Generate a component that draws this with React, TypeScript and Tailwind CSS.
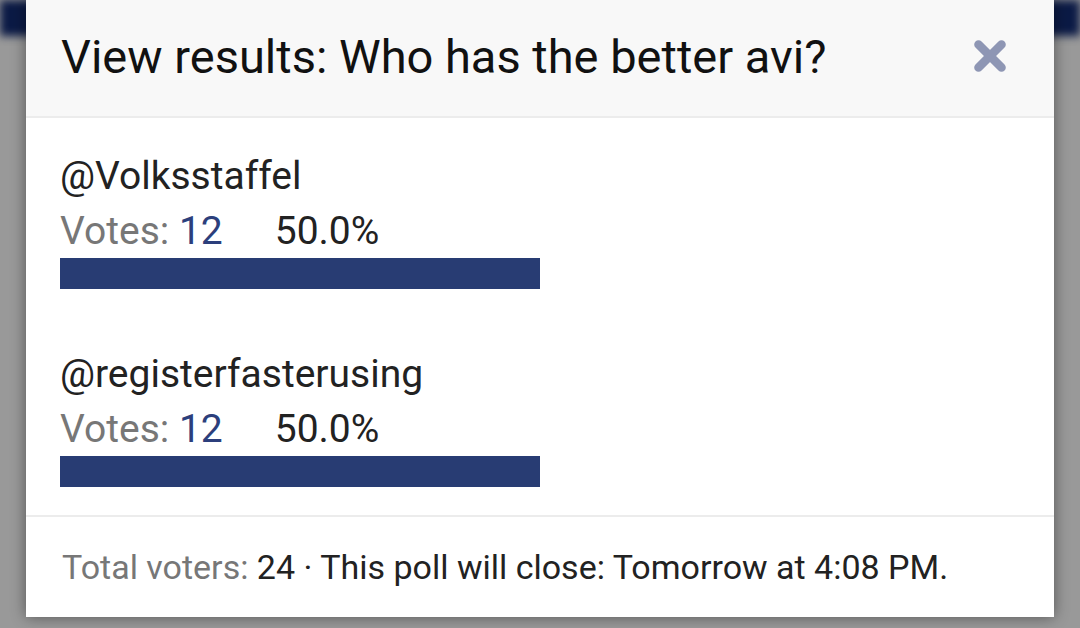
import { X } from 'lucide-react'

const options = [
  { name: '@Volksstaffel', votes: 12, pct: 50.0 },
  { name: '@registerfasterusing', votes: 12, pct: 50.0 },
]

export default function App() {
  return (
    <div
      className="relative h-[628px] w-[1080px] overflow-hidden bg-[#999999]"
      style={{ fontFamily: 'Roboto, "Noto Sans", sans-serif' }}
    >
      {/* blurred app bar behind the dialog */}
      <div className="absolute inset-x-0 top-0 h-[36px] bg-[#0b1a45] blur-[4px]" />

      <div className="relative mx-[26px] flex h-[617px] flex-col bg-white shadow-[0_0_14px_rgba(0,0,0,0.45)]">
        <div className="flex h-[118px] items-center justify-between border-b-2 border-[#ececec] bg-[#f8f8f8] pb-[4px] pl-[35px] pr-[41px]">
          <h2 className="text-[47px] leading-none text-[#111]">View results: Who has the better avi?</h2>
          <X size={46} strokeWidth={4.5} className="text-[#8e96b4]" />
        </div>

        <div className="flex flex-1 flex-col gap-[62px] border-b-2 border-[#ececec] px-[34px] pt-[35px]">
          {options.map((o) => (
            <div key={o.name}>
              <div className="text-[39px] leading-[46px] text-[#222]">{o.name}</div>
              <div className="mt-[11px] flex text-[39px] leading-[42px]">
                <span className="text-[#777]">
                  Votes: <span className="text-[#2c3f7c]">{o.votes}</span>
                </span>
                <span className="ml-[52px] text-[#222]">{o.pct.toFixed(1)}%</span>
              </div>
              <div className="mt-[6px] h-[31px] w-[480px] bg-[#eee]">
                <div className="h-full bg-[#283c73]" style={{ width: `${o.pct * 2}%` }} />
              </div>
            </div>
          ))}
        </div>

        <div className="flex h-[100px] items-center px-[36px] text-[34px] text-[#222]">
          <span className="text-[#777]">Total voters:&nbsp;</span>
          24 · This poll will close: Tomorrow at 4:08 PM.
        </div>
      </div>
    </div>
  )
}
